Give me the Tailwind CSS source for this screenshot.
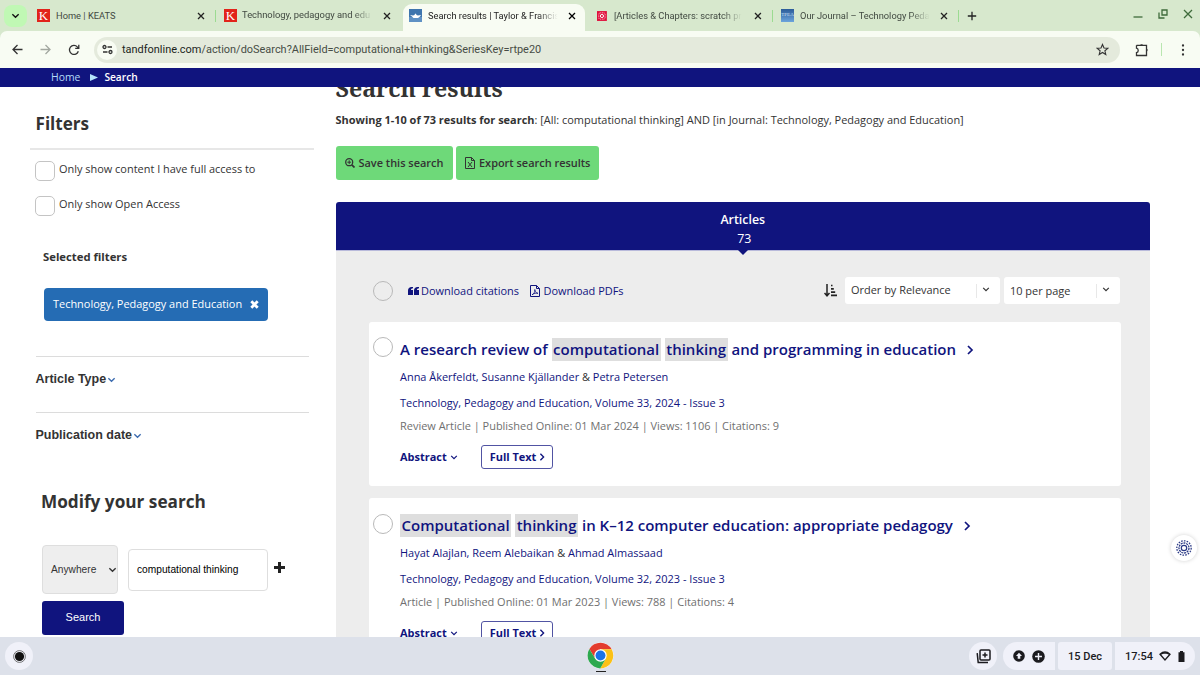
<!DOCTYPE html>
<html lang="en">
<head>
  <meta charset="utf-8" />
  <title>Search results | Taylor &amp; Francis Online</title>
  <script src="https://cdn.jsdelivr.net/npm/@tailwindcss/browser@4"></script>
</head>
<body class="w-[1200px] h-[675px] overflow-hidden flex flex-col bg-white font-['Open_Sans',sans-serif] text-[#333]">

  <!-- shared icons -->
  <svg class="hidden">
    <symbol id="close" viewBox="0 0 10 10"><path d="M2 2l6 6M8 2l-6 6" fill="none" stroke="currentColor" stroke-width="1.3" /></symbol>
    <symbol id="down" viewBox="0 0 10 10"><path d="M1.5 3.5L5 7l3.500-3.500" fill="none" stroke="currentColor" stroke-width="1.500" /></symbol>
    <symbol id="right" viewBox="0 0 10 10"><path d="M3 1l4 4-4 4" fill="none" stroke="currentColor" stroke-width="1.700" /></symbol>
  </svg>

  <!-- tab strip -->
  <div class="h-[31px] shrink-0 flex items-stretch bg-[#d7e8cd] font-['Roboto',sans-serif] text-[9.3px] text-[#414941] whitespace-nowrap">
    <div class="w-[37px] flex items-center pl-[4px]">
      <div class="w-[23px] h-[22px] rounded-lg bg-[#c0f8b4] flex items-center justify-center text-[#111]">
        <svg class="size-[9px]"><use href="#down" /></svg>
      </div>
    </div>
    <div class="w-[178px] flex items-center">
      <div class="size-[13px] bg-[#e2231a] text-white text-center font-['Liberation_Serif',serif] text-[13px] leading-[13px]">K</div>
      <div class="ml-[6px] w-[138px]">Home | KEATS</div>
      <svg class="ml-[2px] size-[10px] text-[#222]"><use href="#close" /></svg>
    </div>
    <div class="w-[188px] flex items-center">
      <div class="w-px h-[12px] bg-[#9bdb91]"></div>
      <div class="ml-[8px] size-[13px] bg-[#e2231a] text-white text-center font-['Liberation_Serif',serif] text-[13px] leading-[13px]">K</div>
      <div class="ml-[5px] w-[132px] text-[9.4px] [mask-image:linear-gradient(to_right,black_84%,transparent_99%)]">Technology, pedagogy and edu</div>
      <svg class="ml-[8px] size-[10px] text-[#222]"><use href="#close" /></svg>
    </div>
    <div class="w-[182px] mt-[4px] h-[27px] rounded-t-[9px] bg-[#f8fcf3] flex items-center text-[#222] pb-[4px]">
      <svg class="ml-[6px] size-[13px]" viewBox="0 0 13 13"><rect width="13" height="13" fill="#3e75ae" /><path d="M0 8h13v5H0z" fill="#5f91c4" /><path d="M1 6l3 .5 1.500-.6.500-1.200h1l.5 1.200 1.500.6 3-.5-1 1.500-2 1.500H4.500L3 7.500z" fill="#fff" /></svg>
      <div class="ml-[6px] w-[131px] [mask-image:linear-gradient(to_right,black_84%,transparent_99%)]">Search results | Taylor &amp; Francis</div>
      <svg class="ml-[8px] size-[10px] text-black"><use href="#close" /></svg>
    </div>
    <div class="w-[188px] flex items-center">
      <svg class="ml-[12px] size-[10px]" viewBox="0 0 10 10"><rect width="10" height="10" fill="#e00f3c" /><circle cx="5" cy="5" r="1.600" fill="none" stroke="#fff" /><rect x="1.800" y="1.800" width="6.400" height="6.400" rx="1.500" fill="none" stroke="#fff" stroke-width=".7" stroke-dasharray="1 .7" /></svg>
      <div class="ml-[7px] w-[131px] [mask-image:linear-gradient(to_right,black_84%,transparent_99%)]">[Articles &amp; Chapters: scratch pr</div>
      <svg class="ml-[10px] size-[10px] text-[#222]"><use href="#close" /></svg>
      <div class="ml-[9px] w-px h-[12px] bg-[#9bdb91]"></div>
    </div>
    <div class="w-[187px] flex items-center">
      <div class="ml-[8px] size-[13px] bg-linear-to-b from-[#2b5c99] to-[#6ca4dc] text-[#cfe0f2] text-center text-[5px] leading-[12px] font-['Liberation_Serif',serif]">TPEA</div>
      <div class="ml-[6px] w-[131px] [mask-image:linear-gradient(to_right,black_84%,transparent_99%)]">Our Journal – Technology Peda</div>
      <svg class="ml-[8px] size-[10px] text-[#222]"><use href="#close" /></svg>
      <div class="ml-[9px] w-px h-[12px] bg-[#9bdb91]"></div>
    </div>
    <svg class="self-center ml-[7px] size-[10px]" viewBox="0 0 10 10"><path d="M5 .8v8.400M.8 5h8.400" stroke="#222" stroke-width="1.300" /></svg>
    <div class="ml-auto mr-[7px] flex items-center gap-[15px] pb-[3px] text-[#3f6b3b]">
      <svg class="size-[10px]" viewBox="0 0 10 10"><path d="M.5 8h9" stroke="currentColor" stroke-width="1.300" /></svg>
      <svg class="size-[10px]" viewBox="0 0 10 10"><path d="M4 1h5v5H4zM1 3.500V9h5.500" fill="none" stroke="currentColor" stroke-width="1.300" /></svg>
      <svg class="size-[10px]" viewBox="0 0 10 10"><path d="M1 1l8 8M9 1L1 9" stroke="currentColor" stroke-width="1.300" /></svg>
    </div>
  </div>

  <!-- toolbar -->
  <div class="h-[37px] shrink-0 bg-[#d7e8cd]">
    <div class="h-full rounded-t-[7px] bg-[#f8fcf3] flex items-center font-['Roboto',sans-serif]">
      <svg class="ml-[12px] size-[11px]" viewBox="0 0 11 11"><path d="M10.500 5.500H1.200M5.500 1L1 5.500 5.500 10" fill="none" stroke="#333" stroke-width="1.300" /></svg>
      <svg class="ml-[17px] size-[11px]" viewBox="0 0 11 11"><path d="M.5 5.500h9.300M5.500 1L10 5.500 5.500 10" fill="none" stroke="#a3a8a0" stroke-width="1.300" /></svg>
      <svg class="ml-[17px] size-[12px]" viewBox="0 0 12 12"><path d="M10.300 7.200A4.500 4.500 0 1 1 9.300 2.900L10.700 4.300M10.800.8v3.600H7.200" fill="none" stroke="#333" stroke-width="1.300" /></svg>
      <div class="ml-[14px] w-[1026px] h-[26px] rounded-full bg-[#e4eadc] flex items-center">
        <div class="ml-[3px] size-[20px] rounded-full bg-[#f8fcf3] flex items-center justify-center">
          <svg class="size-[11px]" viewBox="0 0 11 11" fill="none" stroke="#333" stroke-width="1.300"><circle cx="2.500" cy="3" r="1.500" /><path d="M5.500 3h4.500M1 8h4.500" /><circle cx="8.500" cy="8" r="1.500" /></svg>
        </div>
        <div class="ml-[5px] mt-px text-[10.95px] text-[#474d45]"><span class="text-[#1c1f1b]">tandfonline.com</span>/action/doSearch?AllField=computational+thinking&amp;SeriesKey=rtpe20</div>
        <svg class="ml-auto mr-[11px] size-[13px]" viewBox="0 0 13 13"><path d="M6.500 1.500l1.500 3.500 3.800.3-2.900 2.500.9 3.700-3.300-2-3.300 2 .9-3.700-2.900-2.500 3.800-.3z" fill="none" stroke="#333" stroke-width="1.100" /></svg>
      </div>
      <svg class="ml-[15px] size-[14px]" viewBox="0 0 14 14"><path d="M1.500 2.300h10v3.200M11.500 8.800v3.700h-10V9.600c2.300-.4 2.300-4 0-4.400V2.300M11.500 5.500v3.300" fill="none" stroke="#333" stroke-width="1.300" /><path d="M5 2.300a1.700 1.700 0 0 1 3.200 0zM11.500 5.500a1.700 1.700 0 0 1 0 3.200z" fill="#333" /></svg>
      <div class="ml-[12px] w-px h-[13px] bg-[#b9e6b0]"></div>
      <svg class="ml-[18px] size-[12px]" viewBox="0 0 12 12" fill="#333"><circle cx="3" cy="1.500" r="1.150" /><circle cx="3" cy="6" r="1.150" /><circle cx="3" cy="10.500" r="1.150" /></svg>
    </div>
  </div>

  <!-- breadcrumb -->
  <div class="h-[19px] shrink-0 bg-[#10147e] flex items-center pl-[51px] text-[10.4px] text-white">
    <span class="text-[#b5dcf8]">Home</span>
    <svg class="ml-[10px] mr-[6px] w-[8px] h-[7px]" viewBox="0 0 8 7"><path d="M0 0l8 3.500L0 7z" fill="#b5e4fb" /></svg>
    <span class="font-semibold text-[10.2px]">Search</span>
  </div>

  <!-- page -->
  <div class="h-[550px] shrink-0 overflow-hidden flex relative whitespace-nowrap">
    <aside class="w-[335.5px] shrink-0 text-[10.95px]">
      <h2 class="ml-[35.5px] mt-[25px] text-[17.1px] leading-[24px] font-bold">Filters</h2>
      <div class="ml-[30px] mt-[12px] w-[284px] border-t-2 border-[#e7e7e7]"></div>
      <label class="ml-[35px] mt-[11px] h-[20px] flex"><span class="size-[20px] border border-[#c4c4c4] rounded-[5px]"></span><span class="ml-[4px] leading-[15px]">Only show content I have full access to</span></label>
      <label class="ml-[35px] mt-[15px] h-[20px] flex"><span class="size-[20px] border border-[#c4c4c4] rounded-[5px]"></span><span class="ml-[4px] leading-[15px]">Only show Open Access</span></label>
      <h3 class="ml-[43px] mt-[33px] text-[11.3px] leading-[16px] font-bold">Selected filters</h3>
      <button class="ml-[44px] mt-[23px] w-[224px] h-[33px] rounded-[4px] bg-[#256cb4] text-white flex items-center pl-[9px] text-[10.95px]">
        Technology, Pedagogy and Education
        <svg class="ml-[8px] size-[9px]" viewBox="0 0 9 9"><path d="M1.300 1.300l6.400 6.400M7.700 1.300L1.300 7.700" stroke="#fff" stroke-width="2.800" /></svg>
      </button>
      <div class="ml-[35.5px] mt-[35px] w-[273px] h-[56px] border-t border-[#dcdcdc] font-['Liberation_Sans',sans-serif] font-bold text-[12.5px] leading-[16px] pt-[14px] flex">Article Type<svg class="ml-px mt-[4px] size-[9px] text-[#3c6cb0]"><use href="#down" /></svg></div>
      <div class="ml-[35.5px] w-[273px] h-[56px] border-t border-[#dcdcdc] font-['Liberation_Sans',sans-serif] font-bold text-[12.5px] leading-[16px] pt-[14px] flex">Publication date<svg class="ml-px mt-[4px] size-[9px] text-[#3c6cb0]"><use href="#down" /></svg></div>
      <h2 class="ml-[41px] mt-[22px] text-[17.200px] leading-[24px] font-bold">Modify your search</h2>
      <div class="ml-[42px] mt-[31px] h-[49px] flex items-center font-['Liberation_Sans',sans-serif] text-[10.2px]">
        <div class="w-[76px] h-[49px] rounded-[4px] border border-[#dedede] bg-[#eee] pl-[8px] pr-0 flex items-center justify-between">Anywhere<svg class="size-[9px]"><use href="#down" /></svg></div>
        <div class="ml-[10px] w-[140px] h-[42px] rounded-[4px] border border-[#dedede] pl-[8px] flex items-center text-black">computational thinking</div>
        <svg class="ml-[6px] -mt-[4px] size-[11px]" viewBox="0 0 11 11"><path d="M5.500 0v11M0 5.500h11" stroke="#222" stroke-width="3" /></svg>
      </div>
      <button class="block ml-[42px] mt-[7px] w-[82px] h-[34px] pb-px rounded-[3px] bg-[#10147e] text-white font-['Liberation_Sans',sans-serif] text-[11px]">Search</button>
    </aside>

    <main class="w-[814.5px] shrink-0 text-[10.96px]">
      <h1 class="-mt-[14px] h-[30px] leading-[30px] font-['Noto_Serif','DejaVu_Serif',serif] font-bold text-[23.2px]">Search results</h1>
      <p class="mt-[9px] leading-[16px]"><b>Showing 1-10 of 73 results for search</b>: [All: computational thinking] AND [in Journal: Technology, Pedagogy and Education]</p>
      <div class="mt-[18px] flex gap-[3px] text-[10.95px] font-semibold">
        <button class="w-[117.500px] h-[34px] rounded-[3px] bg-[#6ed979] flex items-center pl-[9px]">
          <svg class="mr-[4px] size-[10px]" viewBox="0 0 10 10" fill="none" stroke="#333"><circle cx="4.200" cy="4.200" r="3.500" stroke-width="1.300" /><path d="M4.200 2.300v3.800M2.300 4.200h3.800" /><path d="M6.800 6.800l2.700 2.700" stroke-width="1.700" /></svg>
          Save this search
        </button>
        <button class="w-[143px] h-[34px] rounded-[3px] bg-[#6ed979] flex items-center pl-[9px]">
          <svg class="mr-[4px] w-[10px] h-[12px]" viewBox="0 0 10 12" fill="none" stroke="#333"><path d="M.5.5h6l3 3v8h-9zM6.500.5v3h3" /><path d="M3 5l4 5M7 5l-4 5" /></svg>
          Export search results
        </button>
      </div>
      <div class="mt-[22px] h-[49px] rounded-t-[3px] bg-[#10147e] text-white text-center relative border-b border-[#b9badb]">
        <div class="pt-[8px] text-[12.4px] leading-[19px] font-semibold">Articles</div>
        <div class="pl-[3px] text-[12.4px] leading-[19px]">73</div>
        <svg class="absolute left-[401px] top-[47px] w-[12px] h-[6px]" viewBox="0 0 12 6"><path d="M0 0h12L6 6z" fill="#10147e" /></svg>
      </div>
      <div class="h-[600px] bg-[#ededed] pl-[33.5px] pt-[26px]">
        <div class="h-[27px] w-[751px] flex items-center text-[#10147e]">
          <span class="ml-[3.500px] size-[20px] rounded-full border border-[#b9b9b9]"></span>
          <svg class="ml-[15px] mr-[2.500px] w-[11px] h-[8px]" viewBox="0 0 11 8" fill="#10147e"><path d="M5 0v1.300C3.500 1.300 3 2 3 3h2v5H0V3.500C0 1.200 1.500 0 3.500 0zM11 0v1.300C9.500 1.300 9 2 9 3h2v5H6V3.500C6 1.200 7.500 0 9.500 0z" /></svg>
          <span class="mt-[2px]">Download citations</span>
          <svg class="ml-[11.500px] mt-px mr-[3px] w-[10px] h-[12px]" viewBox="0 0 10 12" fill="none" stroke="#10147e"><path d="M.5.5h6l3 3v8h-9zM6.500.5v3h3" /><path d="M2 9.800C4 9 5 7 4.800 4.500 5 7 6.500 8.500 8 8.300 6 7.700 4 8.300 2 9.800z" stroke-width=".8" /></svg>
          <span class="mt-[2px]">Download PDFs</span>
          <svg class="ml-auto mr-[8px] size-[13px]" viewBox="0 0 13 13" fill="none" stroke="#222"><path d="M3 0v11M.5 9L3 11.800 5.500 9" stroke-width="1.500" /><path d="M7 1.500h1.500M7 4.800h2.800M7 8.100h4.200M7 11.400H13" stroke-width="1.700" /></svg>
          <div class="w-[155px] h-[27px] rounded-[3px] bg-white flex items-center pl-[6px] text-[#333]">Order by Relevance
            <span class="ml-auto w-px h-[14px] bg-[#e8e8e8]"></span><svg class="ml-[5px] mr-[10px] mb-[4px] size-[8px]"><use href="#down" /></svg></div>
          <div class="ml-[4px] w-[116px] h-[27px] rounded-[3px] bg-white flex items-center pl-[6px] text-[#333]"><span class="mt-px">10 per page</span>
            <span class="ml-auto w-px h-[14px] bg-[#e8e8e8]"></span><svg class="ml-[5px] mr-[10px] mb-[3px] size-[8px]"><use href="#down" /></svg></div>
        </div>

        <article class="mt-[18px] w-[752px] h-[164px] rounded-[3px] bg-white flex text-[#10147e]">
          <span class="ml-[3.500px] mt-[15px] size-[20px] rounded-full border border-[#b9b9b9]"></span>
          <div class="ml-[7.500px] pt-[16px]">
            <h2 class="h-[23px] leading-[23px] text-[15px] font-semibold flex items-center"><span>A research review of</span><span class="ml-[4px] px-[1.500px] bg-[#dedede]">computational</span><span class="ml-[4px] px-[1.500px] bg-[#dedede]">thinking</span><span class="ml-[4px]">and programming in education</span><svg class="ml-[9px] size-[10px]"><use href="#right" /></svg></h2>
            <p class="mt-[8px] leading-[16px]">Anna Åkerfeldt, Susanne Kjällander <span class="text-[#333]">&amp;</span> Petra Petersen</p>
            <p class="mt-[10px] leading-[16px]">Technology, Pedagogy and Education, Volume 33, 2024 - Issue 3</p>
            <p class="mt-[7px] leading-[16px] text-[#707070]">Review Article | Published Online: 01 Mar 2024 | Views: 1106 | Citations: 9</p>
            <div class="mt-[11px] flex items-center font-bold">
              <span>Abstract</span><svg class="ml-[3px] size-[8px]"><use href="#down" /></svg>
              <span class="ml-[23px] w-[72px] h-[24px] rounded-[3px] border border-[#5154a3] flex items-center pl-[8px]">Full Text<svg class="ml-[1.500px] size-[8px]"><use href="#right" /></svg></span>
            </div>
          </div>
        </article>

        <article class="mt-[12px] w-[752px] h-[164px] rounded-[3px] bg-white flex text-[#10147e]">
          <span class="ml-[3.500px] mt-[16px] size-[20px] rounded-full border border-[#b9b9b9]"></span>
          <div class="ml-[7.500px] pt-[16px]">
            <h2 class="h-[23px] leading-[23px] text-[15px] font-semibold flex items-center"><span class="px-[1.500px] bg-[#dedede]">Computational</span><span class="ml-[4px] px-[1.500px] bg-[#dedede]">thinking</span><span class="ml-[4px]">in K–12 computer education: appropriate pedagogy</span><svg class="ml-[9px] size-[10px]"><use href="#right" /></svg></h2>
            <p class="mt-[8px] leading-[16px]">Hayat Alajlan, Reem Alebaikan <span class="text-[#333]">&amp;</span> Ahmad Almassaad</p>
            <p class="mt-[10px] leading-[16px]">Technology, Pedagogy and Education, Volume 32, 2023 - Issue 3</p>
            <p class="mt-[7px] leading-[16px] text-[#707070]">Article | Published Online: 01 Mar 2023 | Views: 788 | Citations: 4</p>
            <div class="mt-[11px] flex items-center font-bold">
              <span>Abstract</span><svg class="ml-[3px] size-[8px]"><use href="#down" /></svg>
              <span class="ml-[23px] w-[72px] h-[24px] rounded-[3px] border border-[#5154a3] flex items-center pl-[8px]">Full Text<svg class="ml-[1.500px] size-[8px]"><use href="#right" /></svg></span>
            </div>
          </div>
        </article>
      </div>
    </main>

    <!-- floating widget -->
    <div class="absolute left-[1171px] top-[448px] size-[26px] rounded-full bg-white shadow-[0_0_4px_rgba(0,0,0,0.18)] flex items-center justify-center">
      <svg class="size-[16px]" viewBox="0 0 16 16" fill="none" stroke="#2b3a86"><circle cx="8" cy="8" r="2.700" stroke-width="1.200" /><circle cx="8" cy="8" r="5" stroke-width="1.300" stroke-dasharray="2 .8" /><circle cx="8" cy="8" r="7.200" stroke-width="1.300" stroke-dasharray="1.600 1.200" /></svg>
    </div>
  </div>

  <!-- shelf -->
  <div class="h-[38px] shrink-0 bg-[#dde1ea] flex items-center relative font-['Roboto',sans-serif] text-[11px] font-medium text-[#1b1b1f]">
    <div class="ml-[5px] size-[28px] rounded-full bg-[#f0f1f9] flex items-center justify-center">
      <svg class="size-[13px]" viewBox="0 0 13 13"><circle cx="6.500" cy="6.500" r="5.900" fill="none" stroke="#555" stroke-width=".8" /><circle cx="6.500" cy="6.500" r="4.600" fill="#111" /></svg>
    </div>
    <div class="absolute left-[587px] top-[5px] w-[27px]">
      <svg class="size-[27px]" viewBox="0 0 48 48"><circle cx="24" cy="24" r="23" fill="#fff" /><path d="M24 13h19.900A23 23 0 0 0 4.100 12.500L14.500 29.500 24 13z" fill="#e33b2e" /><path d="M33.500 29.500L23.500 47A23 23 0 0 0 43.900 13H24z" fill="#fbc116" /><path d="M14.500 29.500L4.100 12.500A23 23 0 0 0 23.500 47l10-17.500z" fill="#2da94f" /><circle cx="24" cy="24" r="11" fill="#fff" /><circle cx="24" cy="24" r="8.800" fill="#1a73e8" /></svg>
      <div class="mx-auto mt-[2px] w-[10px] h-px bg-[#222]"></div>
    </div>
    <div class="ml-auto size-[28px] rounded-full bg-[#f0f1f9] flex items-center justify-center">
      <svg class="size-[15px]" viewBox="0 0 15 15" fill="none" stroke="#1b1b1f" stroke-width="1.500"><rect x="4" y="1" width="10" height="10" rx="1" /><path d="M9 3.500v5M6.500 6h5M1.200 4.200l1 9.300H12" /></svg>
    </div>
    <div class="ml-[6px] w-[52px] h-[28px] rounded-l-full rounded-r-[3px] bg-[#f0f1f9] flex items-center gap-[7px] pl-[10px]">
      <svg class="size-[12px]" viewBox="0 0 12 12"><circle cx="6" cy="6" r="5.800" fill="#1b1b1f" /><path d="M6 2.800l3 3.200H7.300v2.700H4.700V6H3z" fill="#f0f1f9" /></svg>
      <svg class="size-[13px]" viewBox="0 0 12 12"><circle cx="6" cy="6" r="5.800" fill="#1b1b1f" /><path d="M6 2.800v6.400M2.800 6h6.400" stroke="#f0f1f9" stroke-width="1.300" /></svg>
    </div>
    <div class="ml-[3px] w-[54px] h-[28px] rounded-[3px] bg-[#f0f1f9] flex items-center justify-center pt-[2px]">15 Dec</div>
    <div class="ml-[3px] mr-[5px] w-[80px] h-[28px] rounded-l-[3px] rounded-r-full bg-[#f0f1f9] flex items-center pl-[10px]"><span class="mt-[2px]">17:54</span>
      <svg class="ml-[6px] w-[12px] h-[10px]" viewBox="0 0 12 10"><path d="M1 3.200C4 .6 8 .6 11 3.200L6 9z" fill="none" stroke="#1b1b1f" stroke-width="1.300" /><path d="M1 3.200C4 .6 8 .6 11 3.200L10.300 3.800C8 2.300 4 2.300 1.700 3.800z" fill="#1b1b1f" /></svg>
      <svg class="ml-[7px] w-[7px] h-[11px]" viewBox="0 0 7 11"><path d="M2 0h3v1.200h1.500V11h-6V1.200H2z" fill="#1b1b1f" /></svg>
    </div>
  </div>
</body>
</html>
